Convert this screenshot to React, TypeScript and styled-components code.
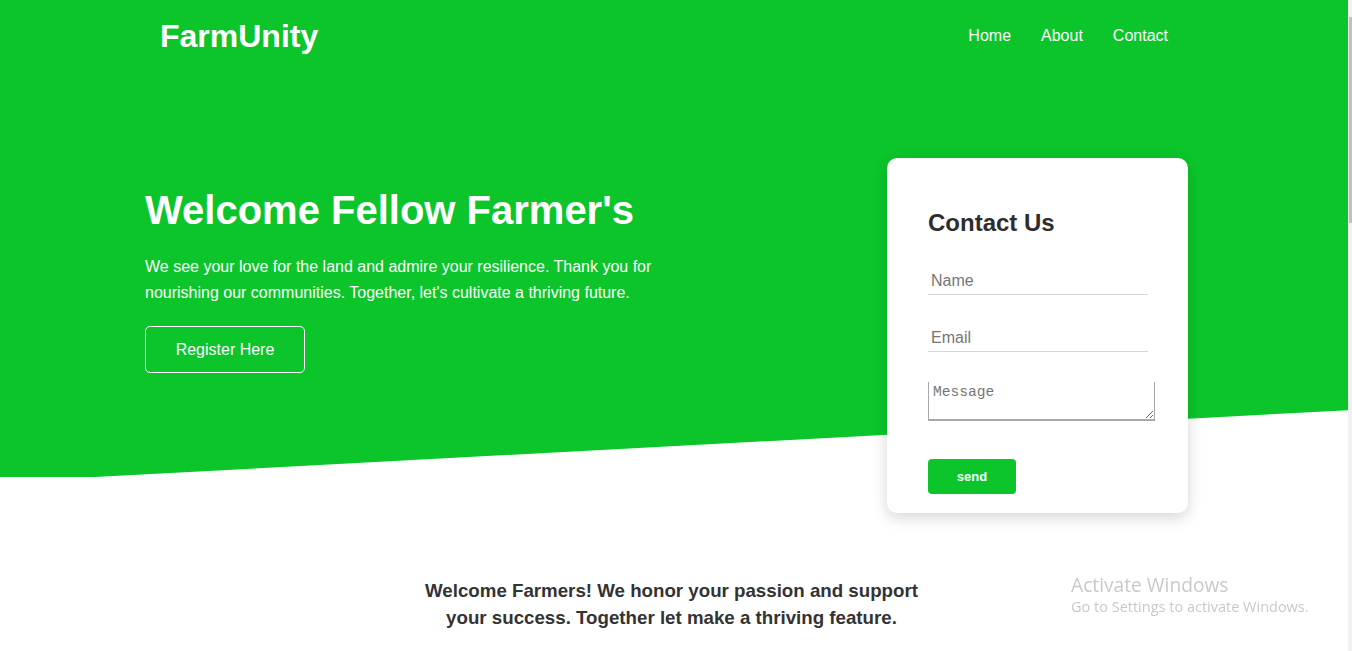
import React from "react";
import styled, { createGlobalStyle } from "styled-components";

const GREEN = "#0bc52a";

const Global = createGlobalStyle`
  html, body { margin: 0; padding: 0; }
  body {
    font-family: "Liberation Sans", Arial, sans-serif;
    background: #ffffff;
    color: #333;
  }
`;

const Page = styled.div`
  width: calc(100% - 4px);
  overflow: hidden;
`;

const ScrollTrack = styled.div`
  position: fixed;
  top: 0;
  right: 0;
  bottom: 0;
  width: 4px;
  background: #f1f1f1;
`;

const ScrollThumb = styled.div`
  position: absolute;
  top: 17px;
  right: 0;
  width: 3px;
  height: 206px;
  background: #c1c1c1;
`;

const Hero = styled.section`
  position: relative;
  height: 477px;
  &::before {
    content: "";
    position: absolute;
    inset: 0;
    background: ${GREEN};
    clip-path: polygon(0 0, 100% 0, 100% 86%, 7% 100%, 0 100%);
    z-index: 0;
  }
`;

const Header = styled.header`
  position: relative;
  z-index: 1;
  height: 72px;
  display: flex;
  align-items: center;
  justify-content: space-between;
  padding: 0 180px 0 160px;
`;

const Logo = styled.div`
  font-size: 32px;
  font-weight: 700;
  color: #fff;
`;

const Nav = styled.nav`
  display: flex;
  gap: 30px;
`;

const NavLink = styled.a`
  color: #fff;
  font-size: 16px;
  text-decoration: none;
  cursor: pointer;
`;

const HeroBody = styled.div`
  position: relative;
  z-index: 1;
  display: flex;
  justify-content: space-between;
  align-items: flex-start;
  margin-top: 86px;
  padding: 0 160px 0 145px;
`;

const Intro = styled.div`
  padding-top: 29px;
  color: #fff;
`;

const Title = styled.h1`
  margin: 0;
  font-size: 40px;
  line-height: 46px;
  font-weight: 700;
  color: #fff;
`;

const Lead = styled.p`
  margin: 21px 0 20px;
  font-size: 16px;
  line-height: 26px;
  max-width: 540px;
`;

const OutlineButton = styled.button`
  width: 160px;
  height: 47px;
  background: transparent;
  border: 1px solid #fff;
  border-radius: 5px;
  color: #fff;
  font-family: "Liberation Sans", Arial, sans-serif;
  font-size: 16px;
  cursor: pointer;
`;

const Card = styled.div`
  width: 301px;
  height: 355px;
  box-sizing: border-box;
  padding: 51px 40px 19px 41px;
  background: #fff;
  border-radius: 10px;
  box-shadow: 0 5px 15px rgba(0, 0, 0, 0.16);
  display: flex;
  flex-direction: column;
  align-items: flex-start;
`;

const CardTitle = styled.h2`
  margin: 0;
  font-size: 24px;
  line-height: 28px;
  font-weight: 700;
  color: #2d2d2d;
`;

const Field = styled.input<{ $gap: number }>`
  display: block;
  box-sizing: border-box;
  width: 220px;
  height: 27px;
  margin: ${(p) => p.$gap}px 0 0;
  padding: 4px 3px;
  border: none;
  border-bottom: 1px solid #d3d8de;
  outline: none;
  background: transparent;
  font-family: "Liberation Sans", Arial, sans-serif;
  font-size: 16px;
  line-height: 18px;
  color: #333;
  &::placeholder { color: #767676; }
`;

const MessageBox = styled.textarea`
  display: block;
  box-sizing: border-box;
  width: 227px;
  height: 39px;
  margin: 30px 0 0;
  padding: 2px 4px;
  border: 1px solid #a8a8a8;
  border-top: none;
  border-bottom-width: 2px;
  outline: none;
  font-family: "Liberation Mono", "DejaVu Sans Mono", monospace;
  font-size: 14.6px;
  line-height: 17px;
  color: #333;
  &::placeholder { color: #767676; }
`;

const SendButton = styled.button`
  margin-top: 38px;
  width: 88px;
  height: 35px;
  border: none;
  border-radius: 4px;
  background: ${GREEN};
  color: #fff;
  font-family: "Liberation Sans", Arial, sans-serif;
  font-size: 13px;
  font-weight: 700;
  cursor: pointer;
`;

const Welcome = styled.section`
  padding: 100px 0 20px;
  display: flex;
  justify-content: center;
`;

const WelcomeText = styled.h3`
  margin: 0 5px 0 0;
  max-width: 520px;
  text-align: center;
  font-size: 18.72px;
  line-height: 27px;
  font-weight: 700;
  color: #333;
`;

const Watermark = styled.div`
  position: fixed;
  left: 1071px;
  top: 572px;
  color: #c9c9c9;
  font-family: "Open Sans", "Noto Sans", sans-serif;
  pointer-events: none;
`;

const WatermarkTitle = styled.div`
  font-size: 19.2px;
  line-height: 25px;
`;

const WatermarkSub = styled.div`
  font-size: 14.5px;
  line-height: 20px;
`;

export default function App() {
  return (
    <Page>
      <Global />
      <Hero>
        <Header>
          <Logo>FarmUnity</Logo>
          <Nav>
            <NavLink>Home</NavLink>
            <NavLink>About</NavLink>
            <NavLink>Contact</NavLink>
          </Nav>
        </Header>
        <HeroBody>
          <Intro>
            <Title>Welcome Fellow Farmer's</Title>
            <Lead>
              We see your love for the land and admire your resilience. Thank you for
              nourishing our communities. Together, let's cultivate a thriving future.
            </Lead>
            <OutlineButton>Register Here</OutlineButton>
          </Intro>
          <Card>
            <CardTitle>Contact Us</CardTitle>
            <Field $gap={31} type="text" placeholder="Name" />
            <Field $gap={30} type="email" placeholder="Email" />
            <MessageBox placeholder="Message" />
            <SendButton>send</SendButton>
          </Card>
        </HeroBody>
      </Hero>
      <Welcome>
        <WelcomeText>
          Welcome Farmers! We honor your passion and support your success. Together let
          make a thriving feature.
        </WelcomeText>
      </Welcome>
      <Watermark>
        <WatermarkTitle>Activate Windows</WatermarkTitle>
        <WatermarkSub>Go to Settings to activate Windows.</WatermarkSub>
      </Watermark>
      <ScrollTrack>
        <ScrollThumb />
      </ScrollTrack>
    </Page>
  );
}
